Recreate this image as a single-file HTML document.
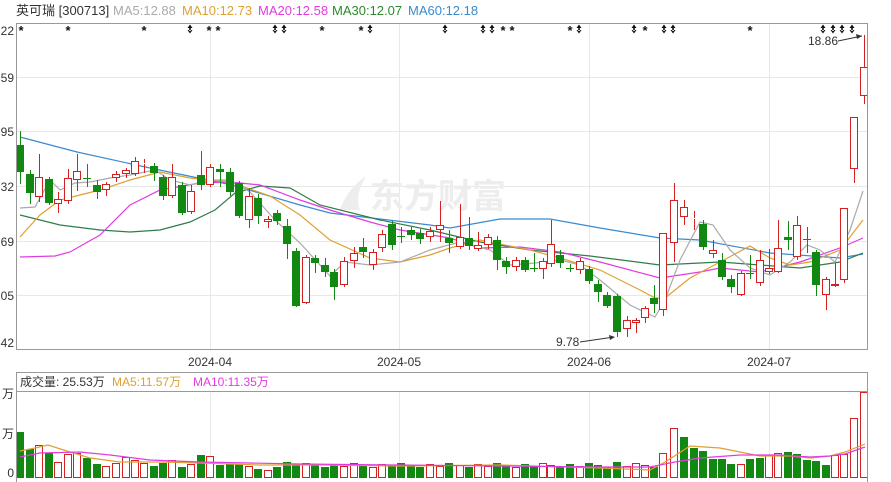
<!DOCTYPE html>
<html><head><meta charset="utf-8"><style>
html,body{margin:0;padding:0;background:#fff;width:891px;height:482px;overflow:hidden}
svg{display:block;font-family:"Liberation Sans","Noto Sans CJK SC",sans-serif}
</style></head><body>
<svg id="s" width="891" height="482" viewBox="0 0 891 482" xmlns="http://www.w3.org/2000/svg">
<text x="16" y="15" font-size="13" fill="#333">英可瑞 [300713]</text>
<text x="113" y="15" font-size="13" fill="#aaa">MA5:12.88</text>
<text x="182" y="15" font-size="13" fill="#e0a030">MA10:12.73</text>
<text x="258" y="15" font-size="13" fill="#e23be2">MA20:12.58</text>
<text x="332" y="15" font-size="13" fill="#2b8a2b">MA30:12.07</text>
<text x="408" y="15" font-size="13" fill="#3a8ad0">MA60:12.18</text>
<g stroke="#e8e8e8" stroke-width="1">
<line x1="17" y1="77.5" x2="867" y2="77.5"/><line x1="17" y1="131.5" x2="867" y2="131.5"/>
<line x1="17" y1="186.5" x2="867" y2="186.5"/><line x1="17" y1="241.5" x2="867" y2="241.5"/>
<line x1="17" y1="295.5" x2="867" y2="295.5"/>
<line x1="210.5" y1="24" x2="210.5" y2="349"/><line x1="399.5" y1="24" x2="399.5" y2="349"/>
<line x1="589.5" y1="24" x2="589.5" y2="349"/><line x1="769.5" y1="24" x2="769.5" y2="349"/>
<line x1="210.5" y1="392" x2="210.5" y2="480"/><line x1="399.5" y1="392" x2="399.5" y2="480"/>
<line x1="589.5" y1="392" x2="589.5" y2="480"/><line x1="769.5" y1="392" x2="769.5" y2="480"/>
</g>
<text x="370" y="208" font-size="34" font-weight="bold" fill="#ededed">东方财富</text>
<path d="M340 210 C346 192 358 182 366 176 C358 190 356 200 360 210 Z" fill="#ededed"/>
<g font-size="12" fill="#333" text-anchor="end">
<text x="14" y="35">22</text><text x="14" y="82">59</text><text x="14" y="136">95</text>
<text x="14" y="191">32</text><text x="14" y="246">69</text><text x="14" y="300">05</text><text x="14" y="347">42</text>
<text x="14" y="398">万</text><text x="14" y="438">万</text><text x="14" y="477">0</text>
</g>
<g font-size="12" fill="#333" text-anchor="middle">
<text x="210" y="366">2024-04</text><text x="399" y="366">2024-05</text>
<text x="589" y="366">2024-06</text><text x="769" y="366">2024-07</text>
</g>
<g id="lines" fill="none" stroke-width="1.2"></g>
<g id="candles"></g>
<g id="vlines" fill="none" stroke-width="1.2"></g>
<g id="marks" fill="#111"></g>
<text x="808" y="45" font-size="12" fill="#333">18.86</text>
<path d="M838 41 L862 36" stroke="#333" fill="none"/><path d="M862 36 l-6 -2 l1 5z" fill="#333"/>
<text x="556" y="346" font-size="12" fill="#333">9.78</text>
<path d="M580 342 L614 337" stroke="#333" fill="none"/><path d="M615 337 l-6 -2 l1 5z" fill="#333"/>
<rect x="16.5" y="23.5" width="851" height="326" fill="none" stroke="#999"/>
<rect x="16.5" y="372.5" width="851" height="112" fill="none" stroke="#999"/>
<line x1="16.5" y1="391.5" x2="867.5" y2="391.5" stroke="#999"/>
<text x="20" y="386" font-size="12" fill="#333">成交量: 25.53万</text>
<text x="112" y="386" font-size="12" fill="#e0a030">MA5:11.57万</text>
<text x="193" y="386" font-size="12" fill="#e23be2">MA10:11.35万</text>
</svg>
<script>
var R="#d42020",G="#118811";
var C=[[20,145,172,131,184,0],[30,174,193,170,204,0],[39,197,177,154,202,1],[49,179,203,177,205,0],[58,204,199,192,213,1],[68,201,178,169,204,1],[77,180,171,154,191,1],[87,178,179,164,187,0],[97,185,192,180,199,0],[106,190,184,182,196,1],[116,178,174,171,182,1],[126,174,170,168,178,1],[135,174,161,157,176,1],[144,164,163,159,173,1],[154,166,173,163,181,0],[163,177,196,175,200,0],[172,196,177,164,198,1],[182,185,213,182,215,0],[191,212,191,185,214,1],[201,175,185,151,190,0],[210,185,167,164,187,1],[220,169,172,164,187,0],[230,172,192,168,196,0],[239,183,216,181,218,0],[249,220,196,188,228,1],[258,198,216,194,224,0],[268,222,219,216,228,1],[277,213,221,210,225,0],[287,226,244,219,259,0],[296,251,306,248,307,0],[306,303,257,255,304,1],[315,258,263,255,273,0],[325,265,272,258,277,0],[334,272,287,269,300,0],[344,285,261,257,287,1],[354,261,253,247,268,1],[363,247,252,238,258,0],[373,265,252,249,270,1],[382,248,234,230,252,1],[392,224,245,221,250,0],[401,236,237,227,243,0],[411,230,235,227,240,0],[420,233,239,229,244,0],[430,237,231,227,242,1],[440,230,225,201,242,1],[449,238,243,230,253,0],[460,247,237,204,249,1],[469,238,246,217,250,0],[478,249,245,232,251,1],[488,245,237,234,249,1],[497,240,260,236,270,0],[506,261,267,257,274,0],[516,267,260,257,271,1],[525,260,270,257,272,0],[534,268,269,253,272,0],[543,269,261,258,279,1],[551,264,244,220,267,1],[560,255,263,250,268,0],[570,268,269,264,272,0],[580,270,261,258,274,1],[589,269,281,266,284,0],[598,284,292,280,302,0],[607,295,306,292,308,0],[617,296,332,294,337,0],[627,329,320,316,337,1],[636,323,320,318,333,1],[645,318,308,306,323,1],[654,298,304,285,313,0],[663,310,233,233,316,1],[674,243,200,183,262,1],[684,217,207,200,225,1],[694,219,218,211,230,1],[703,224,247,220,250,0],[713,254,250,240,258,1],[722,260,277,253,280,0],[731,279,287,275,293,0],[741,295,273,271,296,1],[750,273,274,255,279,0],[760,283,260,250,286,1],[769,272,268,249,274,1],[778,272,248,220,273,1],[788,237,240,221,250,0],[797,257,225,216,260,1],[807,239,240,227,253,0],[816,252,285,250,296,0],[826,295,279,277,310,1],[835,286,284,263,287,1],[844,280,208,208,283,1],[854,169,117,117,183,1],[864,96,67,35,104,1]];
var V={0:432,1:449,2:445,3:453,4:462,5:454,6:453,7:458,8:464,9:466,10:463,11:457,12:460,13:463,16:460,19:455,20:456,22:464,25:469,26:470,28:462,29:464,63:462,68:453,69:428,70:437,71:448,72:451,73:459,74:459,75:464,76:464,77:459,78:458,79:455,80:453,81:452,82:454,83:460,84:461,85:465,86:455,87:454,88:418,89:392};
var VC={70:0,71:0,72:0,73:0,74:0,75:0,77:0,78:0,81:0,82:0,84:0,85:0};
var g=document.getElementById("candles"),h="";
C.forEach(function(c,i){var col=c[5]?R:G,x=c[0],t=Math.min(c[1],c[2]),b=Math.max(c[1],c[2]);if(b-t<1)b=t+1;
h+='<line x1="'+(x+.5)+'" y1="'+c[3]+'" x2="'+(x+.5)+'" y2="'+t+'" stroke="'+col+'"/>';
h+='<line x1="'+(x+.5)+'" y1="'+b+'" x2="'+(x+.5)+'" y2="'+c[4]+'" stroke="'+col+'"/>';
if(c[5])h+='<rect x="'+(x-3.5)+'" y="'+(t+.5)+'" width="7" height="'+(b-t-1)+'" fill="#fff" stroke="'+col+'"/>';
else h+='<rect x="'+(x-4)+'" y="'+t+'" width="8" height="'+(b-t)+'" fill="'+col+'"/>';
var vt=V[i]||(465+((i*7)%5)-2);var up=(i in VC)?VC[i]:c[5];var vc=up?R:G;
if(up)h+='<rect x="'+(x-3.5)+'" y="'+(vt+.5)+'" width="7" height="'+(477-vt)+'" fill="#fff" stroke="'+vc+'"/>';
else h+='<rect x="'+(x-4)+'" y="'+vt+'" width="8" height="'+(478-vt)+'" fill="'+vc+'"/>';});
g.innerHTML=h;
var L=[["#3a8ad0","20,137 77,152 150,168 232,185 300,205 330,213 430,225 450,228 500,219 550,219 600,228 660,238 700,240 770,253 840,258 863,254"],
["#2e7d4a","20,215 60,225 100,230 130,232 160,230 190,222 215,210 235,193 260,186 290,188 320,205 380,220 430,230 480,242 530,250 590,256 660,265 720,262 760,265 800,268 840,262 863,253"],
["#e23be2","20,257 55,256 70,252 100,235 130,205 160,190 200,183 230,182 260,185 300,200 330,210 370,222 400,230 450,238 480,248 520,247 560,252 600,262 660,278 700,272 720,268 760,272 800,262 840,248 863,238"],
["#e0a030","20,237 40,215 60,200 80,195 100,190 130,180 160,172 190,178 230,182 270,196 300,215 330,240 370,258 400,262 430,255 450,248 480,240 530,250 560,258 600,270 640,290 655,298 665,298 690,278 720,262 750,246 770,258 790,265 810,262 840,250 863,220"],
["#aaaaaa","20,208 35,207 50,180 60,190 75,183 90,182 110,178 130,175 155,170 170,180 190,185 210,180 230,180 250,192 275,220 300,243 330,276 345,262 370,265 400,262 430,250 460,242 490,250 510,265 535,263 560,260 580,265 600,280 630,305 655,317 665,300 680,260 700,222 713,225 730,250 750,268 770,275 790,262 807,245 820,250 835,262 850,230 863,191"]];
var VL=[["#e0a030","20,451 35,448 48,445 70,452 90,458 120,462 160,462 200,463 260,465 320,465 400,466 500,465 600,468 650,470 665,462 690,446 720,448 760,456 790,456 810,458 830,456 845,452 865,444"],
["#e23be2","20,457 40,453 80,452 110,455 150,460 200,462 300,464 400,465 500,466 600,467 650,467 675,462 700,458 740,455 780,455 810,457 830,456 845,454 865,447"]];
var lh="";L.forEach(function(l){lh+='<polyline points="'+l[1]+'" stroke="'+l[0]+'"/>';});
document.getElementById("lines").innerHTML=lh;
var vh="";VL.forEach(function(l){vh+='<polyline points="'+l[1]+'" stroke="'+l[0]+'"/>';});
document.getElementById("vlines").innerHTML=vh;
var M=[[21,0],[68,0],[144,0],[190,1],[209,0],[218,0],[275,1],[284,1],[322,0],[361,0],[370,1],[445,1],[483,1],[492,1],[503,0],[512,0],[570,0],[579,1],[634,1],[645,0],[664,1],[673,1],[750,0],[823,1],[833,1],[842,1],[852,1]];
var mh="";M.forEach(function(m){var x=m[0];if(m[1])mh+='<path d="M'+(x-2.5)+' 28 L'+x+' 24.5 L'+(x+2.5)+' 28 Z M'+(x-2.5)+' 30 L'+x+' 33.5 L'+(x+2.5)+' 30 Z M'+(x-.8)+' 27 h1.6 v4 h-1.6z"/>';
else mh+='<text x="'+x+'" y="35" font-size="13" font-weight="bold" text-anchor="middle">*</text>';});
document.getElementById("marks").innerHTML=mh;
</script>
</body></html>
